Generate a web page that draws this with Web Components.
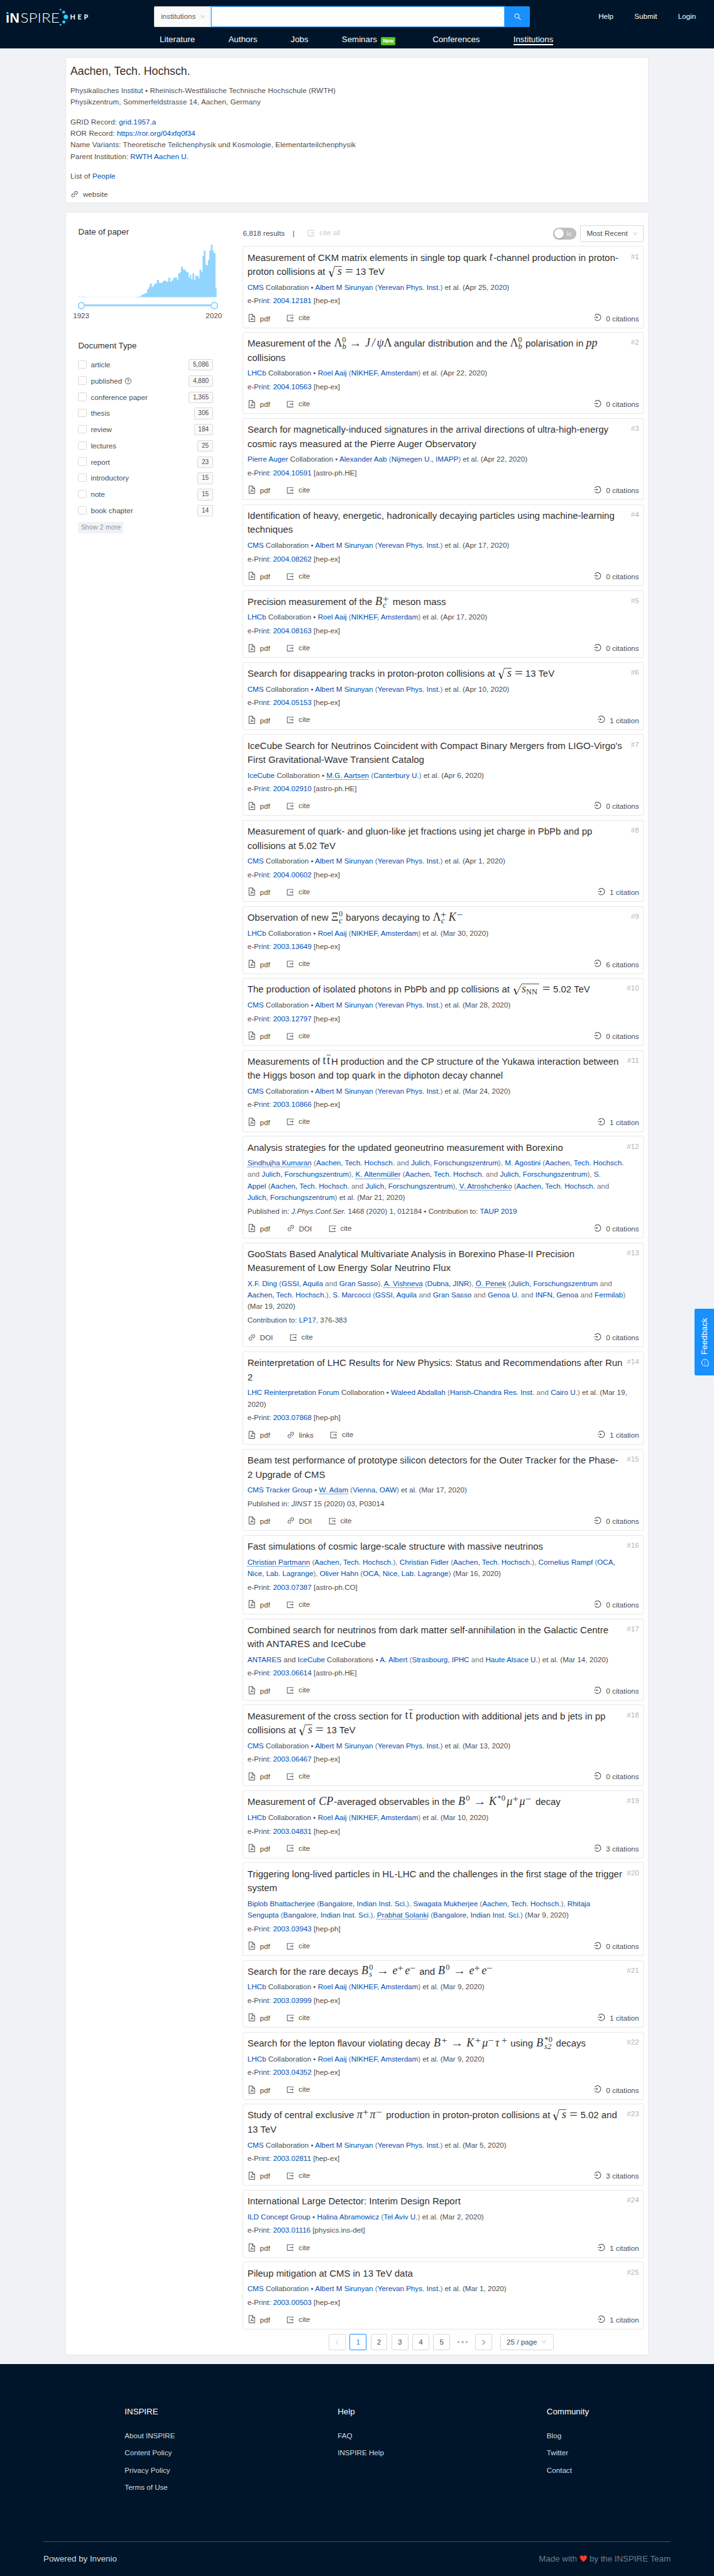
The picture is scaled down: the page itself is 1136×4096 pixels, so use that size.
<!DOCTYPE html>
<html lang="en">
<head>
<meta charset="utf-8">
<title>Aachen, Tech. Hochsch. - INSPIRE</title>
<style>
html{margin:0;background:#001529}
body{margin:0;font:11.642px/18.295px "Liberation Sans",Arial,sans-serif;color:rgba(0,0,0,.75)}
</style>
</head>
<body>
<inspire-app></inspire-app>
<script>
const ICONS={
export:'<path d="M888.3 757.4h-53.8c-4.2 0-7.7 3.5-7.7 7.7v61.8H197.1V197.1h629.8v61.8c0 4.2 3.5 7.7 7.7 7.7h53.8c4.2 0 7.7-3.4 7.7-7.7V158.7c0-17-13.7-30.7-30.7-30.7H158.7c-17 0-30.7 13.7-30.7 30.7v706.6c0 17 13.7 30.7 30.7 30.7h706.6c17 0 30.7-13.7 30.7-30.7V765.1c0-4.3-3.5-7.7-7.7-7.7zm18.6-251.7L765 393.7c-5.3-4.2-13-.4-13 6.3v76H438c-4.4 0-8 3.6-8 8v56c0 4.4 3.6 8 8 8h314v76c0 6.7 7.8 10.5 13 6.3l141.9-112a8 8 0 000-12.6z"/>',
login:'<path d="M521.7 82c-152.5-.4-286.7 78.5-363.4 197.7-3.4 5.3.4 12.3 6.7 12.3h70.3c4.8 0 9.3-2.1 12.3-5.8 7-8.5 14.5-16.7 22.4-24.5 32.6-32.5 70.5-58.1 112.7-75.9 43.6-18.4 90-27.8 137.9-27.8 47.9 0 94.3 9.3 137.9 27.8 42.2 17.8 80.1 43.4 112.7 75.9 32.6 32.5 58.1 70.4 76 112.5C865.7 417.8 875 464.1 875 512c0 47.9-9.4 94.2-27.8 137.8-17.8 42.1-43.4 80-76 112.5s-70.5 58.1-112.7 75.9A352.8 352.8 0 01520.6 866c-47.9 0-94.3-9.4-137.9-27.8A353.84 353.84 0 01270 762.3c-7.9-7.9-15.3-16.1-22.4-24.5-3-3.7-7.6-5.8-12.3-5.8H165c-6.3 0-10.2 7-6.7 12.3C234.9 863.2 368.5 942 520.6 942c236.2 0 428-190.1 430.4-425.6C953.4 277.1 761.3 82.6 521.7 82zM395.02 624v-76h-314c-4.4 0-8-3.6-8-8v-56c0-4.4 3.6-8 8-8h314v-76c0-6.7 7.8-10.5 13-6.3l141.9 112a8 8 0 010 12.6l-141.9 112c-5.2 4.1-13 .4-13-6.3z"/>',
link:'<path d="M574 665.4a8.03 8.03 0 00-11.3 0L446.5 781.6c-53.8 53.8-144.6 59.5-204 0-59.5-59.5-53.8-150.2 0-204l116.2-116.2c3.1-3.1 3.1-8.2 0-11.3l-39.8-39.8a8.03 8.03 0 00-11.3 0L191.4 526.5c-84.6 84.6-84.6 221.5 0 306s221.5 84.6 306 0l116.2-116.2c3.1-3.1 3.1-8.2 0-11.3L574 665.4zm258.6-474c-84.6-84.6-221.5-84.6-306 0L410.3 307.6a8.03 8.03 0 000 11.3l39.7 39.7c3.1 3.1 8.2 3.1 11.3 0l116.2-116.2c53.8-53.8 144.6-59.5 204 0 59.5 59.5 53.8 150.2 0 204L665.3 562.6a8.03 8.03 0 000 11.3l39.8 39.8c3.1 3.1 8.2 3.1 11.3 0l116.2-116.2c84.5-84.6 84.5-221.5 0-306.1zM610.1 372.3a8.03 8.03 0 00-11.3 0L372.3 598.7a8.03 8.03 0 000 11.3l39.6 39.6c3.1 3.1 8.2 3.1 11.3 0l226.4-226.4c3.1-3.1 3.1-8.2 0-11.3l-39.5-39.6z"/>',
search:'<path d="M909.6 854.5L649.9 594.8C690.2 542.7 712 479 712 412c0-80.2-31.3-155.4-87.9-212.1-56.6-56.7-132-87.9-212.1-87.9s-155.5 31.3-212.1 87.9C143.2 256.5 112 331.8 112 412c0 80.1 31.3 155.5 87.9 212.1C256.5 680.8 331.8 712 412 712c67 0 130.6-21.8 182.7-62l259.7 259.6a8.2 8.2 0 0011.6 0l43.6-43.5a8.2 8.2 0 000-11.6zM570.4 570.4C528 612.7 471.8 636 412 636s-116-23.3-158.4-65.6C211.3 528 188 471.8 188 412s23.3-116.1 65.6-158.4C296 211.3 352.2 188 412 188s116.1 23.2 158.4 65.6S636 352.2 636 412s-23.3 116.1-65.6 158.4z"/>',
down:'<path d="M884 256h-75c-5.1 0-9.9 2.5-12.9 6.6L512 654.2 227.9 262.6c-3-4.1-7.8-6.6-12.9-6.6h-75c-6.5 0-10.3 7.4-6.5 12.7l352.6 486.1c12.8 17.6 39 17.6 51.7 0l352.6-486.1c3.9-5.3.1-12.7-6.4-12.7z"/>',
pdf:'<g fill="none" stroke="currentColor" stroke-width="72"><path d="M168 66h428l260 262v630H168z"/><path d="M580 66v280h276" /><path stroke-width="56" d="M480 440c70 10 20 170-122 330M490 480c30 130 120 230 226 220M356 770c50-90 210-140 366-100"/></g>',
question:'<g fill="none" stroke="currentColor" stroke-width="76"><circle cx="512" cy="512" r="410"/><path d="M390 430c0-160 244-160 244 0 0 90-122 90-122 190M512 670v74"/></g>',
chart:'<path d="M888 792H200V168c0-4.400-3.600-8-8-8h-56c-4.400 0-8 3.600-8 8v688c0 4.400 3.600 8 8 8h752c4.400 0 8-3.600 8-8v-56c0-4.400-3.600-8-8-8zM288 712h56V500h-56zM440 712h56V320h-56zM592 712h56V420h-56zM744 712h56V240h-56z"/>',
left:'<path fill="none" stroke="currentColor" stroke-width="84" d="M700 160L300 512l400 352"/>',
right:'<path fill="none" stroke="currentColor" stroke-width="84" d="M320 160l400 352-400 352"/>',
message:'<g fill="none" stroke="currentColor" stroke-width="76"><path d="M920 512a408 408 0 1 0-408 408h360q48 0 48-48z"/><path stroke-width="84" d="M512 290v72M512 476v72M512 662v72"/></g>',
heart:'<path fill="#ff3a2f" d="M512 940C300 760 60 560 60 330 60 60 400 30 512 250 624 30 964 60 964 330c0 230-240 430-452 610z"/>'
};
/* Formulas: total width, then tokens "x|kind|glyph".
   i italic, n roman, e wide relation, a arrow, u superscript, s wide superscript sign,
   d italic subscript, D roman subscript, b bar from x to glyph, r/R radical with rule end */
const TEX={
t:[7.9,'1|i|t'],
sqs:[48,'1|r|26.5','18|i|s','32.500|e|='],
LJ:[110.5,'.6|n|Λ','15.8|u|0','16.3|d|b','29.500|a|→','60|i|J','73|i|/','82.500|i|ψ','95.500|n|Λ'],
Lb:[24.5,'.6|n|Λ','15.8|u|0','16.3|d|b'],
pp:[22,'.5|i|p','11.4|i|p'],
Bc:[29,'1.300|i|B','15.600|s|+','15.6|d|c'],
Xi:[23.5,'0|n|Ξ','14.3|u|0','14.5|d|c'],
LK:[59,'.6|n|Λ','15.400|s|+','16.4|d|c','31|i|K','46.8|s|−'],
snn:[73.1,'2|R|51.5','18|i|s','26.500|D|NN','57.500|e|='],
tt:[16.3,'.5|n|t','8.8|n|t','8|b|15.6'],
CP:[30.5,'1.500|i|C','16|i|P'],
BK:[143.7,'1.3|i|B','16|u|0','30.500|a|→','60|i|K','76|u|*','84|u|0','94|i|μ','105.200|s|+','118.500|i|μ','130|s|−'],
Bs:[107,'1.3|i|B','16|u|0','16|d|s','30|a|→','60.6|i|e','70|s|+','84.6|i|e','93.800|s|−'],
Be:[107,'1.3|i|B','16|u|0','30|a|→','60.6|i|e','70|s|+','84.6|i|e','93.800|s|−'],
Bt:[143.5,'1.3|i|B','16|s|+','34|a|→','64|i|K','80.200|s|+','94|i|μ','105.200|s|−','119|i|τ','130.400|s|+'],
B2:[34,'1.500|i|B','17|u|*','25|u|0','16.8|d|s','23|d|2'],
pi:[51.4,'1|i|π','12|s|+','26|i|π','38|s|−']
};
/* Template lengths are written on a 1366px grid; px values are scaled to the 1136px page. */
const SCALE=.8316;
const fit=s=>s.replace(/(\d*\.?\d+)px/g,(_,n)=>+(n*SCALE).toFixed(3)+'px');
const define=(name,html)=>customElements.define(name,class extends HTMLElement{
  connectedCallback(){
    if(this.shadowRoot)return;
    const root=this.attachShadow({mode:'open'});
    const t=document.createElement('template');
    t.innerHTML=fit(typeof html==='function'?html(this):html);
    root.append(t.content.cloneNode(true));
  }
});
define('ui-icon',el=>`<style>:host{display:inline-block;width:var(--s,16px);height:var(--s,16px);flex:none}svg{display:block;width:100%;height:100%}</style><svg viewBox="0 0 1024 1024" fill="currentColor">${ICONS[el.getAttribute('n')]}</svg>`);
define('tex-math',el=>{
  const [w,...toks]=TEX[el.getAttribute('f')];
  const K={i:['font-style="italic"',21.5,0],n:['',21.5,0],u:['',15,-8.2],d:['font-style="italic"',15,5],D:['',15,3.2],
    a:['textLength="24" lengthAdjust="spacingAndGlyphs"',21.5,0],
    e:['textLength="15.500" lengthAdjust="spacingAndGlyphs"',21.5,0],
    s:['textLength="11.500" lengthAdjust="spacingAndGlyphs"',17,-6.8]};
  const body=toks.map(s=>{
    const [x,k,g]=s.split('|'),X=+x;
    if(k==='b')return `<path d="M${X} -1.500H${g}" stroke="currentColor" stroke-width="1"/>`;
    if(k==='r'||k==='R'){const h=k==='R'?X+16:X+11.500;
      return `<path d="M${X} 10.500L${X+2.500} 8.500L${X+5.800} 19.500L${h} -.6H${g}" fill="none" stroke="currentColor" stroke-width=".95"/><path d="M${X+2.300} 9L${X+5.700} 19" stroke="currentColor" stroke-width="1.700"/>`;}
    const [st,fs,dy]=K[k];
    return `<text x="${X}" y="${16+dy}" font-size="${fs}" ${st}>${g}</text>`;
  }).join('');
  return `<style>:host{display:inline}svg{overflow:visible;width:${w}px;height:16px;font-family:"Liberation Serif","Times New Roman",serif}</style><svg viewBox="0 0 ${w} 16" fill="currentColor">${body}</svg>`;
});
define('top-bar',`<style>
:host{display:block;background:#001529;height:93px;color:#fff;flex:none}
.row{display:flex;height:64px;align-items:center}
.logo{width:283px;margin-left:12px;height:64px;display:block;flex:none}
.search{display:flex;height:40px;width:719px;flex:none}
.scope{box-sizing:border-box;width:109px;background:#fafafa;border:1px solid #d9d9d9;border-right:0;border-radius:2px 0 0 2px;color:rgba(0,0,0,.7);display:flex;align-items:center;justify-content:space-between;padding:0 11px 0 12px}
.scope ui-icon{--s:11px;color:rgba(0,0,0,.25)}
.input{box-sizing:border-box;flex:1;background:#fff;border:1px solid #40a9ff;box-shadow:0 0 0 2px rgba(24,144,255,.25)}
.btn{width:48px;background:#1890ff;border-radius:0 2px 2px 0;display:flex;align-items:center;justify-content:center}
.menu{display:flex;gap:40px;margin-left:131px}
nav{display:flex;gap:64px;font-size:16px;line-height:24px;padding-left:305.5px;white-space:nowrap}
nav span{display:flex;height:23px}
.tag{background:#52c41a;font:bold 10px/16px "Liberation Sans",sans-serif;height:16px;padding:0 3.5px;border-radius:2px;margin:7px 7px 0 7.5px}
.on{box-sizing:border-box;border-bottom:2.5px solid #fff}
</style>
<div class="row"><svg class="logo" viewBox="0 0 283 64">
<g fill="#fff"><text x="-1.200" y="43" font-family="Liberation Sans" font-weight="bold" font-size="27">i</text><text x="6.500" y="43" font-family="Liberation Sans" font-weight="bold" font-size="27" textLength="18.500" lengthAdjust="spacingAndGlyphs">N</text>
<text x="27" y="43" font-family="Lato" font-weight="300" font-size="27" textLength="75" lengthAdjust="spacingAndGlyphs">SPIRE</text>
<text x="122" y="37" font-family="Lato" font-weight="bold" font-size="13" textLength="34.500">HEP</text></g>
<path fill="#001529" d="M-2 22h8v6.500h-8z"/><g fill="#25cffb"><circle cx="2.200" cy="25" r="2.200"/><circle cx="103.800" cy="18.500" r="1.600"/><circle cx="109.800" cy="23.300" r="2.800"/><circle cx="113.900" cy="32.300" r="4.300"/><circle cx="110.200" cy="42" r="3"/><circle cx="103.800" cy="47.400" r="1.700"/></g></svg>
<div class="search"><div class="scope">institutions<ui-icon n="down"></ui-icon></div><div class="input"></div><div class="btn"><ui-icon n="search"></ui-icon></div></div>
<div class="menu"><span>Help</span><span>Submit</span><span>Login</span></div></div>
<nav><span>Literature</span><span>Authors</span><span>Jobs</span><span>Seminars<b class="tag">New</b></span><span>Conferences</span><span class="on">Institutions</span></nav>`);
define('white-box',`<style>:host{display:block;box-sizing:border-box;background:#fff;border:1px solid #e8e8e8;border-radius:2px;width:1115px;margin-left:125.5px}</style><slot></slot>`);
define('institution-info',`<style>
:host{display:block;padding:0 8px}
h2{font-size:21.3px;font-weight:400;line-height:28px;margin:0;padding:11.5px 0 12px;color:rgba(0,0,0,.85)}
p{margin:0 0 16px;letter-spacing:.1px}a{color:#0050b3}.w{display:flex;gap:8px;margin-top:-3px}.w ui-icon{margin-top:2px}
</style><h2>Aachen, Tech. Hochsch.</h2>
<p>Physikalisches Institut • Rheinisch-Westfälische Technische Hochschule (RWTH)<br>Physikzentrum, Sommerfeldstrasse 14, Aachen, Germany</p>
<p>GRID Record: <a>grid.1957.a</a><br>ROR Record: <a>https://ror.org/04xfq0f34</a><br>Name Variants: Theoretische Teilchenphysik und Kosmologie, Elementarteilchenphysik<br>Parent Institution: <a>RWTH Aachen U.</a></p>
<p>List of <a>People</a></p><div class="w"><ui-icon n="link"></ui-icon>website</div>`);
define('date-filter',()=>{
const steps='73,407 81,408.500 92,407 106,408.500 345,406.500 366,403 371,397 378,395 386,390 397,372 404,362 410,345 419,362 425,355 431,345 443,329 453,342 470,334 476,332 486,336 497,318 506,337 512,330 518,323 523,317 538,328 543,297 551,292 556,267 565,279 578,289 582,292 592,316 598,304 604,325 610,297 618,330 623,309 638,320 643,280 651,290 657,216 663,190 671,257 678,260 682,235 689,190 696,164 704,190 709,202 718,365'.split(' ').map(p=>p.split(','));
return `<style>
:host{display:block;height:214px}
h4{font-size:16px;font-weight:400;line-height:24px;margin:0 0 11px;color:rgba(0,0,0,.85)}
svg{display:block;width:265.3px;height:101.6px}
.s{display:flex;align-items:center;height:14px;margin:9px 0 0 -1px;width:268px}
.k{box-sizing:border-box;width:14px;height:14px;border:2.5px solid #91d5ff;border-radius:50%;background:#fff}
.t{flex:1;height:4px;background:#91d5ff}
.l{display:flex;justify-content:space-between;margin:1.5px -9px 0 -10px;width:285px}
</style><h4>Date of paper</h4><svg viewBox="73 160 650 249" preserveAspectRatio="none"><path fill="#91d5ff" d="M73 409${steps.map((p,i)=>(i?'H'+p[0]:'')+'V'+p[1]).join('')}H723V409z"/></svg>
<div class="s"><span class="k"></span><span class="t"></span><span class="k"></span></div><div class="l"><span>1923</span><span>2020</span></div>`;});
define('type-filter',()=>{
const rows=[['article','5,086'],['published','4,880'],['conference paper','1,365'],['thesis','306'],['review','184'],['lectures','25'],['report','23'],['introductory','15'],['note','15'],['book chapter','14']];
return `<style>:host{display:block}
h4{font-size:16px;font-weight:400;line-height:24px;margin:0 0 13px;color:rgba(0,0,0,.85)}
.r{display:flex;align-items:center;height:22px;margin-bottom:9.03px;width:258px}
.c{box-sizing:border-box;width:16px;height:16px;border:1px solid #d9d9d9;border-radius:2px;margin:-2px 8px 0 0}
.q{--s:14px;margin-left:5px}
.n{box-sizing:border-box;margin-left:auto;height:22px;line-height:20px;font-size:12.2px;padding:0 7px;border:1px solid #d9d9d9;border-radius:2px;background:#fafafa}
.m{display:inline-block;font-size:13px;line-height:21.5px;background:#f0f2f5;color:rgba(0,0,0,.45);border-radius:2px;padding:0 5px}
</style><h4>Document Type</h4>${rows.map(r=>`<div class="r"><span class="c"></span>${r[0]}${r[0]==='published'?'<ui-icon class="q" n="question"></ui-icon>':''}<span class="n">${r[1]}</span></div>`).join('')}<span class="m">Show 2 more</span>`;});
define('results-bar',`<style>
:host{display:flex;align-items:center;height:32px;margin-bottom:8px}
.bar{margin:0 24px 0 15px;font-weight:400}.cite{display:flex;gap:8px;align-items:center;color:rgba(0,0,0,.25);margin-top:-3px}
.sw{box-sizing:border-box;margin-left:auto;margin-right:8px;width:44px;height:22px;border-radius:11px;background:rgba(0,0,0,.25);display:flex;align-items:center;justify-content:space-between;padding:0 7px 0 2px;color:#fff}
.sw i{width:18px;height:18px;border-radius:50%;background:#fff;box-shadow:0 2px 4px rgba(0,35,11,.2)}.sw ui-icon{--s:12px;margin-top:-2px}
.sel{box-sizing:border-box;width:121.5px;height:32px;border:1px solid #d9d9d9;border-radius:2px;display:flex;align-items:center;justify-content:space-between;padding:0 10px 0 11px}.sel ui-icon{--s:11px;color:rgba(0,0,0,.25)}
</style>6,818 results<span class="bar">|</span><span class="cite"><ui-icon n="export"></ui-icon>cite all</span><span class="sw"><i></i><ui-icon n="chart"></ui-icon></span><span class="sel">Most Recent<ui-icon n="down"></ui-icon></span>`);
define('result-card',el=>`<style>
:host{display:block;box-sizing:border-box;border:1px solid #e8e8e8;border-radius:2px;padding:7.5px 8px 5.6px 7.5px;margin-bottom:8.05px;white-space:nowrap}
.h{display:flex;justify-content:space-between}
.n{color:rgba(0,0,0,.35)}
::slotted([slot=title]){font-size:18px;line-height:27px;color:rgba(0,0,0,.85)}
::slotted([slot=authors]){display:block;margin-top:5px}
.p{margin-top:4px}
.a{display:flex;gap:31px;margin-top:12px;height:22px}
.a span{display:flex;gap:8px}.a ui-icon{margin-top:1.5px}
.a .cite{margin-top:-1.5px;margin-left:-.5px}.a .cite ui-icon{margin-top:3.5px}.a .cit{margin-left:auto}.cit ui-icon{margin-top:1px}
</style><div class="h"><slot name="title"></slot><span class="n">#${el.getAttribute('no')}</span></div><slot name="authors"></slot><div class="p"><slot></slot></div>
<div class="a">${el.getAttribute('links').split(' ').map(k=>`<span><ui-icon n="${k==='pdf'?'pdf':'link'}"></ui-icon>${k}</span>`).join('')}<span class="cite"><ui-icon n="export"></ui-icon>cite</span><span class="cit"><ui-icon n="login"></ui-icon>${el.getAttribute('cit')} citation${el.getAttribute('cit')==='1'?'':'s'}</span></div>`);

/* Text shorthand: [x] link, [_x] link with dotted underline, <g> muted text */
const rich=s=>s.replace(/\{(\w+)\}/g,'<tex-math f="$1"></tex-math>').replace(/\[_(.*?)\]/g,'<a class="u">$1</a>').replace(/\[(.*?)\]/g,'<a>$1</a>').replace(/\n/g,'<br>');
const CMS=d=>`[CMS] Collaboration • [Albert M Sirunyan] <g>(</g>[Yerevan Phys. Inst.]<g>)</g> et al. (${d}, 2020)`;
const LHCB=d=>`[LHCb] Collaboration • [Roel Aaij] <g>(</g>[NIKHEF, Amsterdam]<g>)</g> et al. (${d}, 2020)`;
const AJ='<g>(</g>[Aachen, Tech. Hochsch.] <g>and</g> [Julich, Forschungszentrum]<g>),</g>';
const BI='<g>(</g>[Bangalore, Indian Inst. Sci.]<g>)</g>';
const E=(id,cat='hep-ex')=>`e-Print: <a>${id}</a> &#91;${cat}&#93;`;
const ITEMS=[
['Measurement of CKM matrix elements in single top quark {t}-channel production in proton-\nproton collisions at {sqs} 13 TeV',CMS('Apr 25'),E('2004.12181'),0],
['Measurement of the {LJ} angular distribution and the {Lb} polarisation in {pp}\ncollisions',LHCB('Apr 22'),E('2004.10563'),0],
['Search for magnetically-induced signatures in the arrival directions of ultra-high-energy\ncosmic rays measured at the Pierre Auger Observatory','[Pierre Auger] Collaboration • [Alexander Aab] <g>(</g>[Nijmegen U., IMAPP]<g>)</g> et al. (Apr 22, 2020)',E('2004.10591','astro-ph.HE'),0],
['Identification of heavy, energetic, hadronically decaying particles using machine-learning\ntechniques',CMS('Apr 17'),E('2004.08262'),0],
['Precision measurement of the {Bc} meson mass',LHCB('Apr 17'),E('2004.08163'),0],
['Search for disappearing tracks in proton-proton collisions at {sqs} 13 TeV',CMS('Apr 10'),E('2004.05153'),1],
["IceCube Search for Neutrinos Coincident with Compact Binary Mergers from LIGO-Virgo's\nFirst Gravitational-Wave Transient Catalog",'[IceCube] Collaboration • [_M.G. Aartsen] <g>(</g>[Canterbury U.]<g>)</g> et al. (Apr 6, 2020)',E('2004.02910','astro-ph.HE'),0],
['Measurement of quark- and gluon-like jet fractions using jet charge in PbPb and pp\ncollisions at 5.02 TeV',CMS('Apr 1'),E('2004.00602'),1],
['Observation of new {Xi} baryons decaying to {LK}',LHCB('Mar 30'),E('2003.13649'),6],
['The production of isolated photons in PbPb and pp collisions at {snn} 5.02 TeV',CMS('Mar 28'),E('2003.12797'),0],
['Measurements of {tt}H production and the CP structure of the Yukawa interaction between\nthe Higgs boson and top quark in the diphoton decay channel',CMS('Mar 24'),E('2003.10866'),1],
['Analysis strategies for the updated geoneutrino measurement with Borexino',`[_Sindhujha Kumaran] ${AJ} [M. Agostini] <g>(</g>[Aachen, Tech. Hochsch.]\n<g>and</g> [Julich, Forschungszentrum]<g>),</g> [_K. Altenmüller] ${AJ} [S.]\n[Appel] ${AJ} [_V. Atroshchenko] <g>(</g>[Aachen, Tech. Hochsch.] <g>and</g>\n[Julich, Forschungszentrum]<g>)</g> et al. (Mar 21, 2020)`,'Published in: <i>J.Phys.Conf.Ser.</i> 1468 (2020) 1, 012184 • Contribution to: <a>TAUP 2019</a>',0,'pdf DOI'],
['GooStats Based Analytical Multivariate Analysis in Borexino Phase-II Precision\nMeasurement of Low Energy Solar Neutrino Flux','[X.F. Ding] <g>(</g>[GSSI, Aquila] <g>and</g> [Gran Sasso]<g>),</g> [_A. Vishneva] <g>(</g>[Dubna, JINR]<g>),</g> [_Ö. Penek] <g>(</g>[Julich, Forschungszentrum] <g>and</g>\n[Aachen, Tech. Hochsch.]<g>),</g> [S. Marcocci] <g>(</g>[GSSI, Aquila] <g>and</g> [Gran Sasso] <g>and</g> [Genoa U.] <g>and</g> [INFN, Genoa] <g>and</g> [Fermilab]<g>)</g>\n(Mar 19, 2020)','Contribution to: <a>LP17</a>, 376-383',0,'DOI'],
['Reinterpretation of LHC Results for New Physics: Status and Recommendations after Run\n2','[LHC Reinterpretation Forum] Collaboration • [Waleed Abdallah] <g>(</g>[Harish-Chandra Res. Inst.] <g>and</g> [Cairo U.]<g>)</g> et al. (Mar 19,\n2020)',E('2003.07868','hep-ph'),1,'pdf links'],
['Beam test performance of prototype silicon detectors for the Outer Tracker for the Phase-\n2 Upgrade of CMS','[CMS Tracker Group] • [_W. Adam] <g>(</g>[Vienna, OAW]<g>)</g> et al. (Mar 17, 2020)','Published in: <i>JINST</i> 15 (2020) 03, P03014',0,'pdf DOI'],
['Fast simulations of cosmic large-scale structure with massive neutrinos','[_Christian Partmann] <g>(</g>[Aachen, Tech. Hochsch.]<g>),</g> [Christian Fidler] <g>(</g>[Aachen, Tech. Hochsch.]<g>),</g> [Cornelius Rampf] <g>(</g>[OCA,]\n[Nice, Lab. Lagrange]<g>),</g> [Oliver Hahn] <g>(</g>[OCA, Nice, Lab. Lagrange]<g>)</g> (Mar 16, 2020)',E('2003.07387','astro-ph.CO'),0],
['Combined search for neutrinos from dark matter self-annihilation in the Galactic Centre\nwith ANTARES and IceCube','[ANTARES] and [IceCube] Collaborations • [A. Albert] <g>(</g>[Strasbourg, IPHC] <g>and</g> [Haute Alsace U.]<g>)</g> et al. (Mar 14, 2020)',E('2003.06614','astro-ph.HE'),0],
['Measurement of the cross section for {tt} production with additional jets and b jets in pp\ncollisions at {sqs} 13 TeV',CMS('Mar 13'),E('2003.06467'),0],
['Measurement of {CP}-averaged observables in the {BK} decay',LHCB('Mar 10'),E('2003.04831'),3],
['Triggering long-lived particles in HL-LHC and the challenges in the first stage of the trigger\nsystem',`[Biplob Bhattacherjee] ${BI}<g>,</g> [Swagata Mukherjee] <g>(</g>[Aachen, Tech. Hochsch.]<g>),</g> [Rhitaja]\n[Sengupta] ${BI}<g>,</g> [_Prabhat Solanki] ${BI} (Mar 9, 2020)`,E('2003.03943','hep-ph'),0],
['Search for the rare decays {Bs} and {Be}',LHCB('Mar 9'),E('2003.03999'),1],
['Search for the lepton flavour violating decay {Bt} using {B2} decays',LHCB('Mar 9'),E('2003.04352'),0],
['Study of central exclusive {pi} production in proton-proton collisions at {sqs} 5.02 and\n13 TeV',CMS('Mar 5'),E('2003.02811'),3],
['International Large Detector: Interim Design Report','[ILD Concept Group] • [Halina Abramowicz] <g>(</g>[Tel Aviv U.]<g>)</g> et al. (Mar 2, 2020)',E('2003.01116','physics.ins-det'),1],
['Pileup mitigation at CMS in 13 TeV data',CMS('Mar 1'),E('2003.00503'),1]];
define('result-list',()=>`<style>:host{display:block}a{color:#0050b3}g{color:rgba(0,0,0,.6)}.u{text-decoration:underline dotted;text-underline-offset:2px}</style>`+ITEMS.map(([t,a,p,c,l],i)=>`<result-card no="${i+1}" cit="${c}" links="${l||'pdf'}"><span slot="title">${rich(t)}</span><span slot="authors">${rich(a)}</span><span>${p}</span></result-card>`).join(''));
define('page-nav',`<style>
:host{display:flex;gap:8px;padding-left:164.5px;height:32px}
span{box-sizing:border-box;width:32px;height:32px;border:1px solid #d9d9d9;border-radius:2px;display:flex;align-items:center;justify-content:center}
ui-icon{--s:13px}.off{color:rgba(0,0,0,.25)}.on{border-color:#1890ff;color:#1890ff}
.dots{border:0;gap:3.5px}.dots i{width:4px;height:4px;border-radius:50%;background:rgba(0,0,0,.25)}
.sel{width:102px;margin-left:8px;justify-content:space-between;padding:0 11px}.sel ui-icon{--s:11px;color:rgba(0,0,0,.25)}
</style><span class="off"><ui-icon n="left"></ui-icon></span><span class="on">1</span><span>2</span><span>3</span><span>4</span><span>5</span><span class="dots"><i></i><i></i><i></i></span><span><ui-icon n="right"></ui-icon></span><span class="sel">25 / page<ui-icon n="down"></ui-icon></span>`);
define('search-page',`<style>
:host{display:flex;box-sizing:border-box;padding:24px 8px 0 23px}
aside{width:315px;flex:none;padding-top:1px}aside type-filter{margin-top:4px}
main{width:767px;flex:none}
</style><aside><date-filter></date-filter><type-filter></type-filter></aside><main><results-bar></results-bar><result-list></result-list><page-nav></page-nav></main>`);
define('page-footer',`<style>
:host{display:block;box-sizing:border-box;flex:1;background:#001529;color:rgba(255,255,255,.85);padding-top:79px}
.cols{display:flex;height:260.5px;padding-left:238.5px}
.cols div{display:flex;flex-direction:column;gap:11px}
.cols div:nth-child(1){width:407.5px}.cols div:nth-child(2){width:400px}
h4{margin:0 0 12.5px;font-size:16px;line-height:24px;font-weight:400;color:#fff}
.b{display:flex;justify-content:space-between;margin:0 83px;border-top:1px solid #3b4b5b;padding-top:20px;font-size:16px;line-height:24px}
.m{display:flex;gap:4.5px;color:rgba(255,255,255,.45)}ui-icon{margin-top:4px;--s:15px}
</style><div class="cols"><div><h4>INSPIRE</h4><span>About INSPIRE</span><span>Content Policy</span><span>Privacy Policy</span><span>Terms of Use</span></div><div><h4>Help</h4><span>FAQ</span><span>INSPIRE Help</span></div><div><h4>Community</h4><span>Blog</span><span>Twitter</span><span>Contact</span></div></div>
<div class="b"><span>Powered by Invenio</span><span class="m">Made with<ui-icon n="heart"></ui-icon>by the INSPIRE Team</span></div>`);
define('feedback-tab',`<style>
:host{position:absolute;right:0;top:2502.5px;width:37px;height:127px;box-sizing:border-box;background:#1890ff;color:#fff;border-radius:3px 0 0 3px;display:flex;flex-direction:column;align-items:center;padding:15px 0 0 2px;gap:8px;font-size:16px;line-height:20px}
b{font-weight:400;writing-mode:vertical-rl;transform:rotate(180deg);height:72px}
</style><b>Feedback</b><ui-icon n="message"></ui-icon>`);
define('inspire-app',`<style>
:host{display:flex;flex-direction:column;position:relative;background:#f0f2f5;height:100vh;overflow:hidden}
.body{padding-top:16.5px;height:4427px;box-sizing:border-box;flex:none}
.first{margin-bottom:17px;height:279px}.second{height:4097.5px}
</style><top-bar></top-bar><div class="body"><white-box class="first"><institution-info></institution-info></white-box><white-box class="second"><search-page></search-page></white-box></div><page-footer></page-footer><feedback-tab></feedback-tab>`);
</script>
</body>
</html>
